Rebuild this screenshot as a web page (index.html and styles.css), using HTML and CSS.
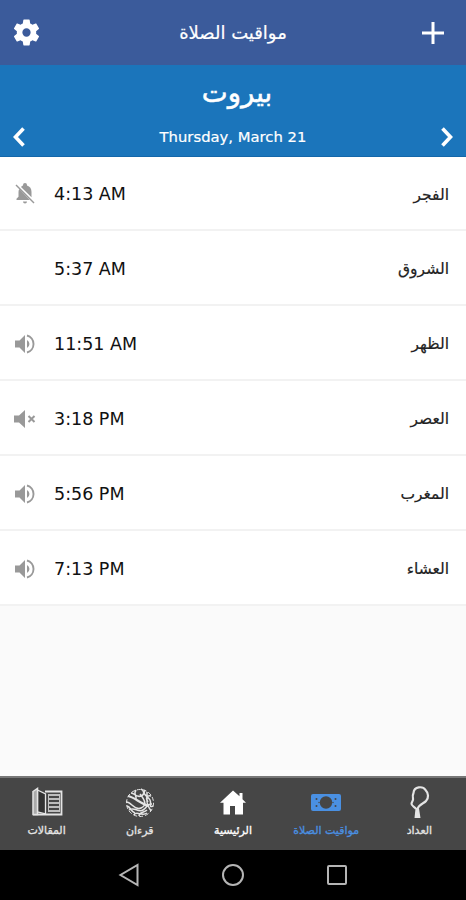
FILE: index.html
```
<!doctype html>
<html lang="ar">
  <head>
    <meta charset="utf-8">
    <title>مواقيت الصلاة</title>
    <link rel="stylesheet" href="styles.css">
  </head>
  <body>
    <header class="topbar">
      <svg class="gear" viewBox="0 0 24 24"><path d="M19.43 12.98c.04-.32.07-.64.07-.98s-.03-.66-.07-.98l2.11-1.65c.19-.15.24-.42.12-.64l-2-3.46c-.12-.22-.39-.3-.61-.22l-2.49 1c-.52-.4-1.08-.73-1.69-.98l-.38-2.65C14.46 2.18 14.25 2 14 2h-4c-.25 0-.46.18-.49.42l-.38 2.65c-.61.25-1.17.59-1.69.98l-2.49-1c-.23-.09-.49 0-.61.22l-2 3.46c-.13.22-.07.49.12.64l2.11 1.65c-.04.32-.07.65-.07.98s.03.66.07.98l-2.11 1.65c-.19.15-.24.42-.12.64l2 3.46c.12.22.39.3.61.22l2.49-1c.52.4 1.08.73 1.69.98l.38 2.65c.03.24.24.42.49.42h4c.25 0 .46-.18.49-.42l.38-2.65c.61-.25 1.17-.59 1.69-.98l2.49 1c.23.09.49 0 .61-.22l2-3.46c.12-.22.07-.49-.12-.64zM12 15.200a3.200 3.200 0 1 1 0-6.400 3.200 3.200 0 0 1 0 6.400z"/></svg>
      <h1 dir="rtl">مواقيت الصلاة</h1>
      <svg class="plus" viewBox="0 0 22 22"><path d="M11 0v22M0 11h22"/></svg>
    </header>

    <section class="city">
      <h2 dir="rtl">بيروت</h2>
      <div class="date-row">
        <svg class="chevron" viewBox="0 0 12 20"><path d="M10.500 1.500L2.500 10l8 8.500"/></svg>
        <span>Thursday, March 21</span>
        <svg class="chevron" viewBox="0 0 12 20"><path d="M1.500 1.500L9.500 10l-8 8.500"/></svg>
      </div>
    </section>

    <!-- shared icons -->
    <svg class="defs">
      <symbol id="sound" viewBox="0 0 22 22">
        <path d="M1 7.500h4.500L11 2v18l-5.500-5.500H1z"/>
        <path d="M13 7a4.500 4.500 0 0 1 0 8z"/>
        <path d="M13 2.500a8.800 8.800 0 0 1 0 17" fill="none" stroke="currentColor" stroke-width="1.900"/>
      </symbol>
    </svg>

    <main class="times">
      <div class="row">
        <svg class="status" viewBox="0 0 22 22"><path d="M9 2.600V2a2 2 0 0 1 4 0v.6c3 .8 4.500 3.300 4.500 6.400v5.300L7 4c.6-.6 1.300-1.100 2-1.400zM5.400 6L15.800 17H2.500v-1.200l2-2V9c0-1.200.3-2.200.9-3zM9 18.500h4a2 2 0 0 1-4 0z"/><path d="M2 2l18 18" fill="none" stroke="currentColor" stroke-width="1.500"/></svg>
        <span class="time">4:13 AM</span>
        <span class="name">الفجر</span>
      </div>
      <div class="row">
        <span class="status"></span>
        <span class="time">5:37 AM</span>
        <span class="name">الشروق</span>
      </div>
      <div class="row">
        <svg class="status"><use href="#sound"/></svg>
        <span class="time">11:51 AM</span>
        <span class="name">الظهر</span>
      </div>
      <div class="row">
        <svg class="status" viewBox="0 0 22 22"><path d="M0 7.500h5L11 2v18l-6-5.500H0z"/><path d="M14.500 8l6 6M20.500 8l-6 6" fill="none" stroke="currentColor" stroke-width="2"/></svg>
        <span class="time">3:18 PM</span>
        <span class="name">العصر</span>
      </div>
      <div class="row">
        <svg class="status"><use href="#sound"/></svg>
        <span class="time">5:56 PM</span>
        <span class="name">المغرب</span>
      </div>
      <div class="row">
        <svg class="status"><use href="#sound"/></svg>
        <span class="time">7:13 PM</span>
        <span class="name">العشاء</span>
      </div>
    </main>

    <nav class="tabs">
      <a class="tab">
        <svg viewBox="0 0 32 32" fill="none" stroke="currentColor"><path d="M14 4.500h16.500v23H2" stroke-width="1.800"/><path d="M6.500 3l8 4v20l-8-2z" fill="#333" stroke-width="1.300"/><path d="M2 4.500l4.500-3v26H2z" fill="#aaa" stroke-width="1.500"/><path d="M18 8h10M18 12h10M18 16h10M18 20h10M18 24h10" stroke-width="1.700"/><path d="M17.500 7v18M28.500 7v18" stroke-width=".8"/></svg>
        <span>المقالات</span>
      </a>
      <a class="tab">
        <svg viewBox="0 0 32 32" fill="none" stroke="currentColor" stroke-width="1.500"><path d="M4 9c6 1 13 8 21 10" stroke-width="2.200"/><path d="M2 15c5-1 8 9 15 6s3-9-1-14M7 6c4 0 5 5 10 3s2-6 0-7M21 3c-3 5 3 6 5 10s-2 8 3 6M23 5v9c0 7 3 7 4 10M5 23c5-4 9 3 14 0s3-6 9-6M10 28c2-5 8 2 13-2M12 3c-3 4 1 6 0 9M27 9c-4-1-6 2-3 6M15 29c0-4 5-3 8-6M3 19c4 1 3 5 8 7"/><circle cx="16" cy="16" r="13.500" stroke-width="1" stroke-dasharray="4 2"/></svg>
        <span>قرءان</span>
      </a>
      <a class="tab home">
        <svg viewBox="0 0 32 32" fill="currentColor"><path d="M16 3.500L3 15.800h3.500V27.500H13V19h5v8.500h8V15.800h3l-3.500-3.500V6h-3v3.300z"/></svg>
        <span>الرئيسية</span>
      </a>
      <a class="tab active">
        <svg viewBox="0 0 32 32"><rect x="1" y="7" width="30" height="17" rx="2" fill="currentColor"/><g fill="#464646"><circle cx="16" cy="15.500" r="6.200"/><circle cx="6.500" cy="12" r="1"/><circle cx="6.500" cy="19" r="1"/><circle cx="25.500" cy="12" r="1"/><circle cx="25.500" cy="19" r="1"/><circle cx="9" cy="15.500" r=".7"/><circle cx="23" cy="15.500" r=".7"/></g></svg>
        <span>مواقيت الصلاة</span>
      </a>
      <a class="tab">
        <svg viewBox="0 0 32 32" fill="none" stroke="currentColor"><path d="M13 22C12 20 8 19 8.500 16.500c.5-2 2-3 1.500-5S9.500 8 10.500 6C11-1 20-1 22.500 3c3 3 3.500 8 .5 11-2 2.500-7 3-8.500 8" stroke-width="2.200"/><path d="M12.500 21.500h3.500l1.500 9.500h-6z" fill="currentColor" stroke="none"/></svg>
        <span>العداد</span>
      </a>
    </nav>

    <footer class="android-nav">
      <svg viewBox="0 0 24 24"><path d="M20.500 2v20L3.500 12z"/></svg>
      <svg viewBox="0 0 24 24"><circle cx="12" cy="12" r="10"/></svg>
      <svg viewBox="0 0 24 24"><rect x="3" y="3" width="18" height="18" rx="1"/></svg>
    </footer>
  </body>
</html>
```
FILE: styles.css
```
* {
  box-sizing: border-box;
}

body {
  margin: 0;
  height: 900px;
  display: flex;
  flex-direction: column;
  overflow: hidden;
  background: #fafafa;
  font-family: "DejaVu Sans", sans-serif;
}

svg {
  display: block;
  flex: none;
  overflow: visible;
}

.defs {
  display: none;
}

.topbar {
  height: 65px;
  padding: 0 22px 0 11px;
  display: flex;
  align-items: center;
  justify-content: space-between;
  background: #3b5b9b;
  color: #fff;
}

.topbar h1 {
  margin: 0 0 1px 2px;
  font-size: 18px;
  font-weight: normal;
  -webkit-text-stroke: 0.2px;
}

.gear {
  width: 31px;
  height: 31px;
  fill: #fff;
}

.plus {
  width: 22px;
  height: 22px;
  stroke: #fff;
  stroke-width: 3;
}

.city {
  height: 92px;
  display: flex;
  flex-direction: column;
  background: #1b75bb;
  border-bottom: 1px solid #1467aa;
  color: #fff;
}

.city h2 {
  margin: 0;
  padding-left: 8px;
  height: 56px;
  line-height: 55px;
  font-size: 27.5px;
  font-weight: normal;
  text-align: center;
  -webkit-text-stroke: 0.5px;
}

.date-row {
  padding: 0 13px;
  height: 32px;
  display: flex;
  align-items: center;
  justify-content: space-between;
  font-size: 14.8px;
  -webkit-text-stroke: 0.2px;
}

.date-row span {
  padding-bottom: 2px;
}

.chevron {
  width: 12px;
  height: 20px;
  fill: none;
  stroke: #fff;
  stroke-width: 3.6;
}

.row {
  height: 75px;
  padding: 2px 17px 0 14px;
  display: flex;
  align-items: center;
  background: #fff;
  border-bottom: 2px solid #f2f2f2;
}

.row:first-child {
  height: 74px;
}

.status {
  width: 22px;
  height: 22px;
  margin-right: 18px;
  fill: #999;
  color: #999;
}

.time {
  flex: 1;
  font-size: 17.5px;
  color: #111;
}

.name {
  padding-top: 1px;
  font-size: 15.5px;
  color: #222;
  -webkit-text-stroke: 0.2px;
}

.tabs {
  height: 74px;
  margin-top: auto;
  padding-top: 9px;
  display: grid;
  grid-template-columns: repeat(5, 1fr);
  background: #464646;
  border-top: 2px solid #777;
}

.tab {
  display: flex;
  flex-direction: column;
  align-items: center;
  gap: 5px;
  color: #e4e4e4;
  font-size: 11px;
  white-space: nowrap;
  -webkit-text-stroke: 0.3px;
}

.tab svg {
  width: 32px;
  height: 32px;
}

.home {
  color: #fff;
}

.active {
  color: #4a90e2;
}

.android-nav {
  height: 50px;
  display: flex;
  align-items: center;
  justify-content: center;
  gap: 80px;
  background: #000;
}

.android-nav svg {
  width: 24px;
  height: 24px;
  fill: none;
  stroke: #b5b5b5;
  stroke-width: 2;
}
```
